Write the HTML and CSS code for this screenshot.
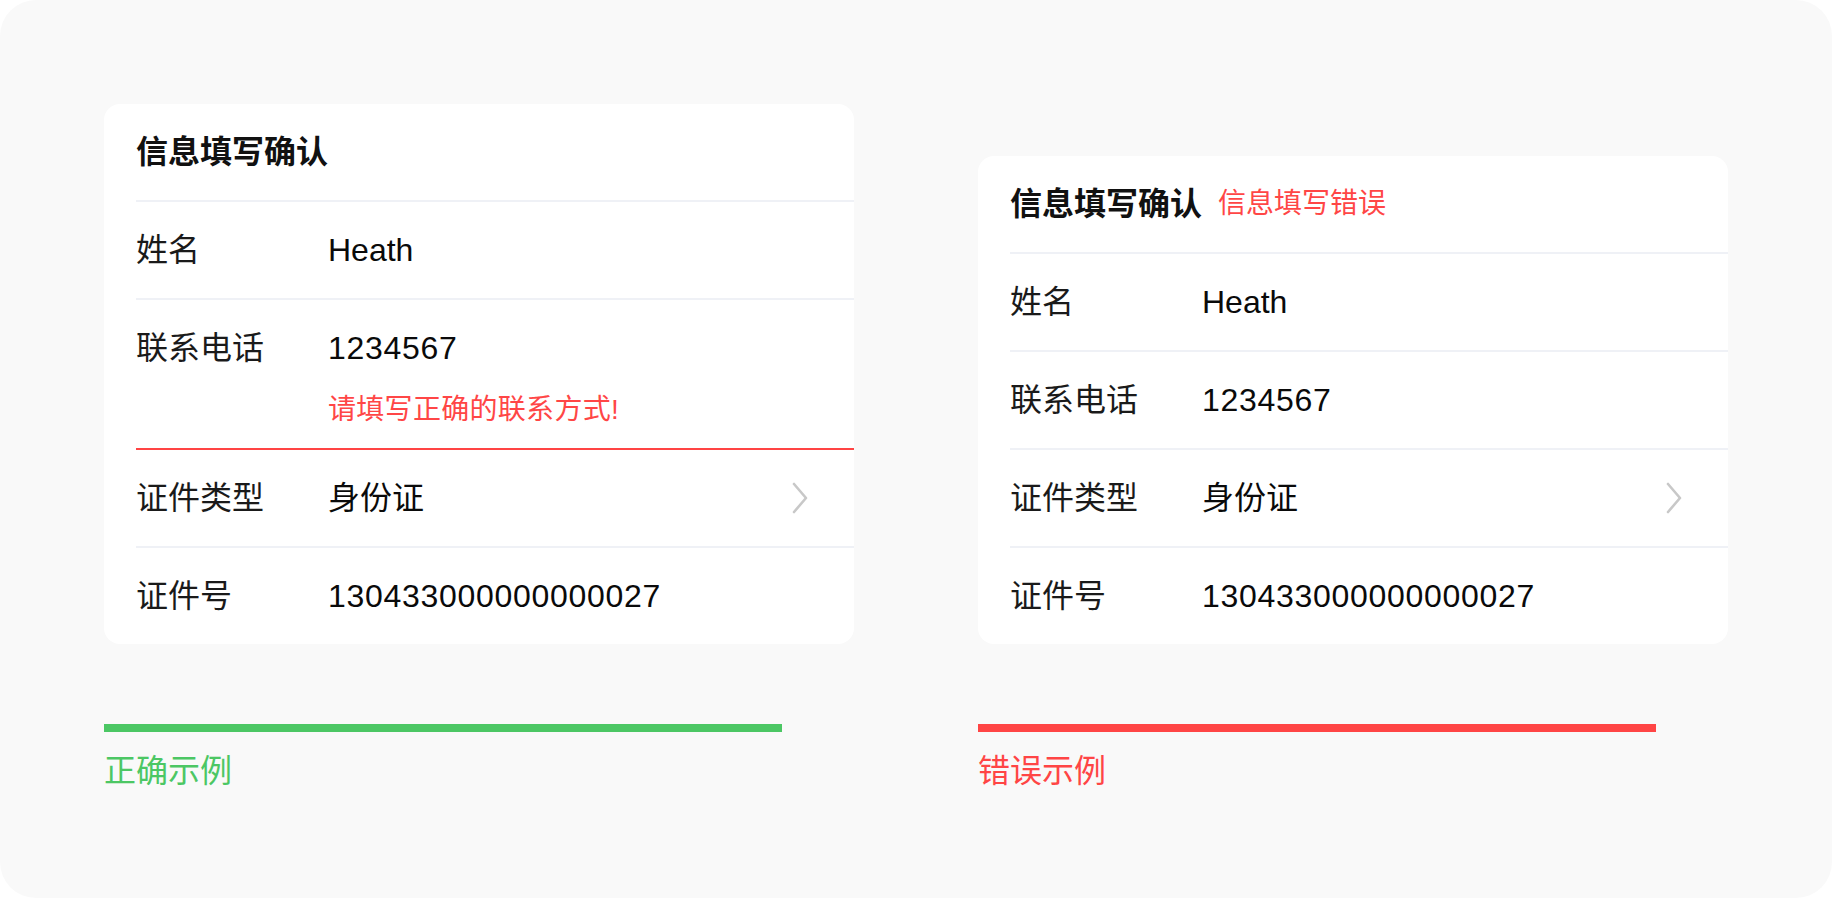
FILE: index.html
```html
<!DOCTYPE html>
<html lang="zh-CN">
<head>
<meta charset="utf-8">
<title>信息填写确认示例</title>
<link rel="stylesheet" href="styles.css">
</head>
<body>
<div class="frame">
  <div class="cards">
    <div class="card">
      <div class="card-head"><span class="title">信息填写确认</span></div>
      <div class="rows">
        <div class="row"><span class="label">姓名</span><span class="value">Heath</span></div>
        <div class="row row-error">
          <div class="row-main"><span class="label">联系电话</span><span class="value num">1234567</span></div>
          <div class="error-msg">请填写正确的联系方式!</div>
        </div>
        <div class="row"><span class="label">证件类型</span><span class="value">身份证</span>
          <svg class="chev" width="18" height="34" viewBox="0 0 18 34"><path d="M3 3 L15 17 L3 31" fill="none" stroke="#c8c8c8" stroke-width="2.6" stroke-linecap="round" stroke-linejoin="round"/></svg>
        </div>
        <div class="row"><span class="label">证件号</span><span class="value num">130433000000000027</span></div>
      </div>
    </div>
    <div class="card">
      <div class="card-head"><span class="title">信息填写确认</span><span class="head-error">信息填写错误</span></div>
      <div class="rows">
        <div class="row"><span class="label">姓名</span><span class="value">Heath</span></div>
        <div class="row"><span class="label">联系电话</span><span class="value num">1234567</span></div>
        <div class="row"><span class="label">证件类型</span><span class="value">身份证</span>
          <svg class="chev" width="18" height="34" viewBox="0 0 18 34"><path d="M3 3 L15 17 L3 31" fill="none" stroke="#c8c8c8" stroke-width="2.6" stroke-linecap="round" stroke-linejoin="round"/></svg>
        </div>
        <div class="row"><span class="label">证件号</span><span class="value num">130433000000000027</span></div>
      </div>
    </div>
  </div>
  <div class="captions">
    <div class="caption good"><div class="bar"></div><div class="cap-text">正确示例</div></div>
    <div class="caption bad"><div class="bar"></div><div class="cap-text">错误示例</div></div>
  </div>
</div>
</body>
</html>
```
FILE: styles.css
```css
* { box-sizing: border-box; }
html, body { margin: 0; padding: 0; background: #ffffff; }
body {
  font-family: "Liberation Sans", "Noto Sans CJK SC", sans-serif;
  color: #1a1a1a;
}
.frame {
  width: 1832px;
  height: 898px;
  background: #f9f9f9;
  border-radius: 36px;
  padding: 104px 104px 0 104px;
}
.cards {
  display: flex;
  align-items: flex-end;
  gap: 124px;
}
.card {
  width: 750px;
  background: #ffffff;
  border-radius: 16px;
  overflow: hidden;
}
.card-head {
  height: 98px;
  margin-left: 32px;
  border-bottom: 2px solid #eff1f6;
  display: flex;
  align-items: center;
}
.title {
  font-size: 32px;
  font-weight: 700;
  color: #111111;
  line-height: 48px;
}
.head-error {
  font-size: 28px;
  color: #ff4646;
  margin-left: 16px;
  line-height: 48px;
}
.rows { margin-left: 32px; }
.row {
  display: flex;
  align-items: center;
  padding: 24px 45px 24px 0;
  border-bottom: 2px solid #eff1f6;
  font-size: 32px;
  line-height: 48px;
}
.row:last-child { border-bottom: none; }
.row-error {
  display: block;
  padding-bottom: 18px;
  border-bottom-color: #ff4444;
}
.row-main { display: flex; align-items: center; }
.label { width: 192px; flex: none; color: #1a1a1a; }
.value { color: #0a0a0a; }
.num { letter-spacing: 0.7px; }
.chev { margin-left: auto; flex: none; }
.error-msg {
  margin-top: 18px;
  margin-left: 192px;
  font-size: 28px;
  line-height: 40px;
  letter-spacing: 0.3px;
  color: #ff4646;
}
.captions {
  display: flex;
  gap: 124px;
  margin-top: 80px;
}
.caption { width: 750px; }
.bar { width: 678px; height: 8px; }
.good .bar { background: #4cc764; }
.bad .bar { background: #ff4545; }
.cap-text {
  margin-top: 15px;
  font-size: 32px;
  line-height: 48px;
}
.good .cap-text { color: #4cc764; }
.bad .cap-text { color: #ff4545; }
```
